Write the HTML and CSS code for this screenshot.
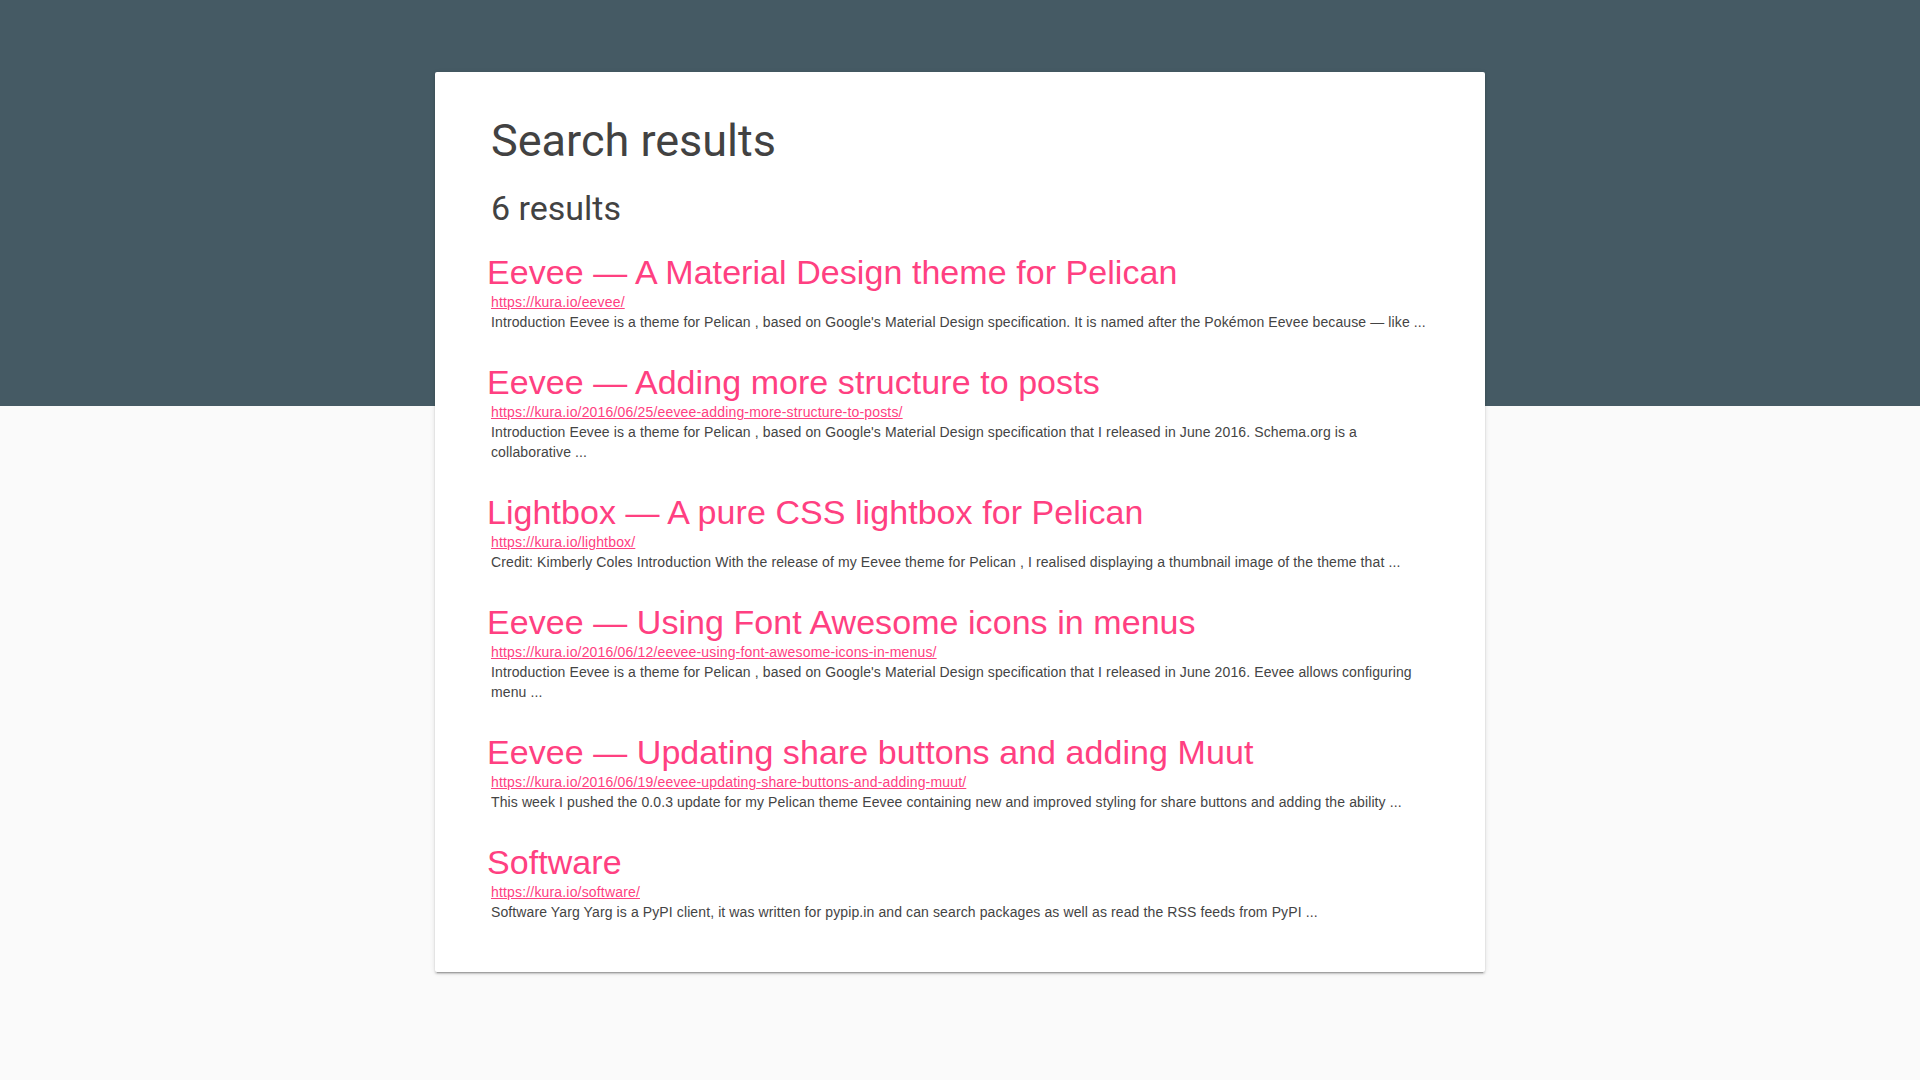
FILE: index.html
```html
<!DOCTYPE html>
<html lang="en">
<head>
<meta charset="utf-8">
<title>Search results</title>
<link rel="stylesheet" href="styles.css">
</head>
<body>
<div class="page">
  <main class="card">
    <h1 class="page-title">Search results</h1>
    <h2 class="count">6 results</h2>
    <ul class="results">
      <li class="result">
        <a class="result-title" href="#">Eevee — A Material Design theme for Pelican</a>
        <a class="result-url" href="#">https://kura.io/eevee/</a>
        <p class="result-desc">Introduction Eevee is a theme for Pelican , based on Google's Material Design specification. It is named after the Pokémon Eevee because — like ...</p>
      </li>
      <li class="result">
        <a class="result-title" href="#">Eevee — Adding more structure to posts</a>
        <a class="result-url" href="#">https://kura.io/2016/06/25/eevee-adding-more-structure-to-posts/</a>
        <p class="result-desc">Introduction Eevee is a theme for Pelican , based on Google's Material Design specification that I released in June 2016. Schema.org is a collaborative ...</p>
      </li>
      <li class="result">
        <a class="result-title" href="#">Lightbox — A pure CSS lightbox for Pelican</a>
        <a class="result-url" href="#">https://kura.io/lightbox/</a>
        <p class="result-desc">Credit: Kimberly Coles Introduction With the release of my Eevee theme for Pelican , I realised displaying a thumbnail image of the theme that ...</p>
      </li>
      <li class="result">
        <a class="result-title" href="#">Eevee — Using Font Awesome icons in menus</a>
        <a class="result-url" href="#">https://kura.io/2016/06/12/eevee-using-font-awesome-icons-in-menus/</a>
        <p class="result-desc">Introduction Eevee is a theme for Pelican , based on Google's Material Design specification that I released in June 2016. Eevee allows configuring menu ...</p>
      </li>
      <li class="result">
        <a class="result-title" href="#">Eevee — Updating share buttons and adding Muut</a>
        <a class="result-url" href="#">https://kura.io/2016/06/19/eevee-updating-share-buttons-and-adding-muut/</a>
        <p class="result-desc">This week I pushed the 0.0.3 update for my Pelican theme Eevee containing new and improved styling for share buttons and adding the ability ...</p>
      </li>
      <li class="result">
        <a class="result-title" href="#">Software</a>
        <a class="result-url" href="#">https://kura.io/software/</a>
        <p class="result-desc">Software Yarg Yarg is a PyPI client, it was written for pypip.in and can search packages as well as read the RSS feeds from PyPI ...</p>
      </li>
    </ul>
  </main>
</div>
</body>
</html>
```
FILE: styles.css
```css
html, body {
  margin: 0;
  padding: 0;
}

body {
  background: #fafafa;
  font-family: "Liberation Sans", Arial, sans-serif;
}

.page {
  min-height: 1080px;
  background: linear-gradient(to bottom, #455a64 0, #455a64 406px, #fafafa 406px, #fafafa 100%);
  padding-top: 72px;
  box-sizing: border-box;
}

.card {
  display: block;
  width: 1050px;
  margin: 0 auto;
  box-sizing: border-box;
  padding: 42px 55px 50px 56px;
  background: #ffffff;
  border-radius: 2px;
  box-shadow: 0 2px 2px 0 rgba(0, 0, 0, 0.14), 0 3px 1px -2px rgba(0, 0, 0, 0.2), 0 1px 5px 0 rgba(0, 0, 0, 0.12);
}

.page-title {
  margin: 0;
  font-family: Roboto, "Liberation Sans", sans-serif;
  font-weight: 400;
  font-size: 45px;
  line-height: normal;
  color: #424242;
}

.count {
  margin: 21px 0 0 0;
  font-family: Roboto, "Liberation Sans", sans-serif;
  font-weight: 400;
  font-size: 34px;
  line-height: normal;
  color: #424242;
}

.results {
  list-style: none;
  margin: 25px 0 0 0;
  padding: 0;
  display: flex;
  flex-direction: column;
  gap: 31px;
}

.result {
  display: flex;
  flex-direction: column;
  align-items: flex-start;
}

.result-title {
  margin-left: -4px;
  font-size: 34px;
  line-height: normal;
  letter-spacing: 0.06px;
  color: #ff4081;
  text-decoration: none;
}

.result-url {
  font-size: 14px;
  line-height: 20px;
  letter-spacing: 0.17px;
  color: #ff4081;
  text-decoration: underline;
}

.result-desc {
  margin: 0;
  font-size: 14px;
  line-height: 20px;
  letter-spacing: 0.11px;
  color: #444444;
}
```
